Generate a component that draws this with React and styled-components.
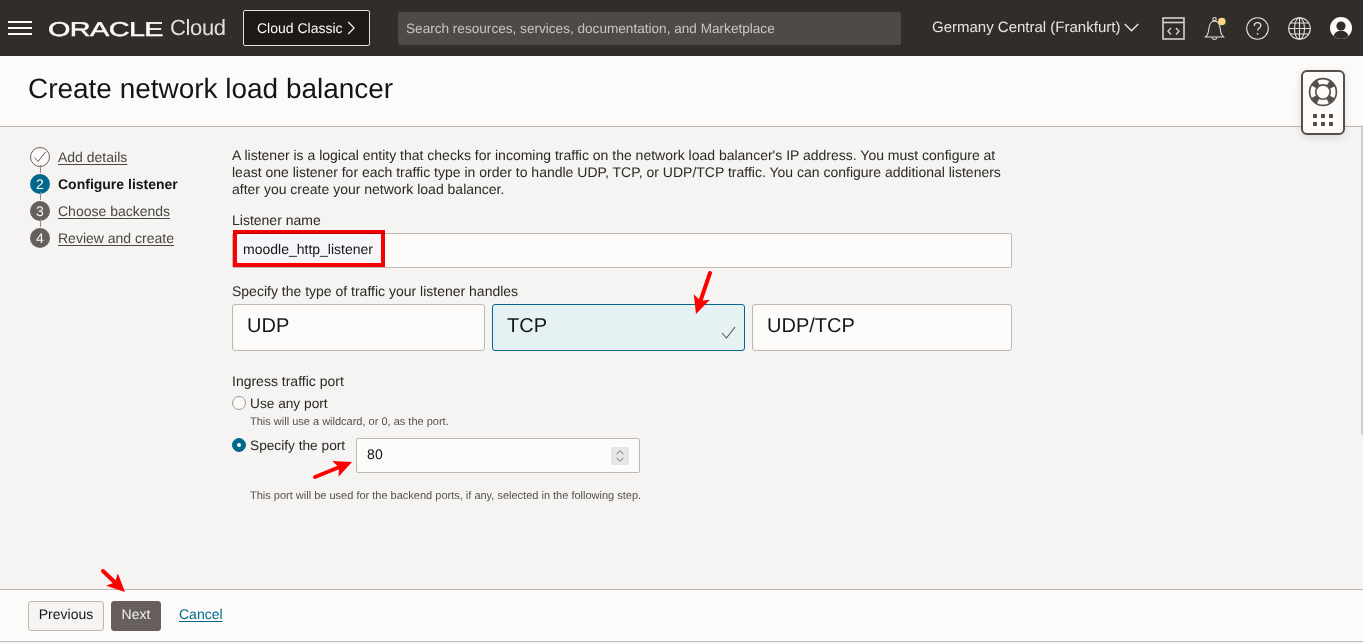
import React from 'react';
import styled, { createGlobalStyle } from 'styled-components';

const Global = createGlobalStyle`
  html, body { margin: 0; padding: 0; height: 100%; overflow: hidden; }
  body {
    font-family: "Liberation Sans", Arial, sans-serif;
    color: #161513;
    background: #f5f4f2;
    text-rendering: geometricPrecision;
  }
  * { box-sizing: border-box; }
`;

const Page = styled.div`
  position: relative;
  width: 1363px;
  height: 643px;
  display: flex;
  flex-direction: column;
  overflow: hidden;
`;

const TopBar = styled.header`
  height: 56px;
  flex: none;
  background: #312d2a;
  display: flex;
  align-items: center;
  padding: 0 9px 0 8px;
  color: #fcfbfa;
`;

const Burger = styled.div`
  width: 24px;
  height: 14px;
  flex: none;
  display: flex;
  flex-direction: column;
  justify-content: space-between;
  margin-top: -1px;
  span { display: block; height: 2px; background: #fcfbfa; }
`;

const Brand = styled.div`
  display: flex;
  align-items: center;
  margin-left: 16px;
  width: 179px;
  flex: none;
  height: 24px;
`;

const Wordmark = styled.span`
  display: inline-block;
  width: 113px;
  flex: none;
  margin-top: 3px;
  font-size: 20px;
  line-height: 24px;
  font-weight: 400;
  -webkit-text-stroke: 0.45px #fcfbfa;
  transform: scaleX(1.44);
  transform-origin: left center;
  letter-spacing: -0.4px;
`;

const CloudWord = styled.span`
  font-size: 22px;
  line-height: 24px;
  letter-spacing: -0.35px;
  color: #e4e1dd;
  margin-left: 9px;
`;

const ClassicButton = styled.div`
  width: 127px;
  height: 36px;
  flex: none;
  margin-left: 16px;
  background: #1d1a18;
  border: 1px solid #e4e1dd;
  border-radius: 2px;
  display: flex;
  align-items: center;
  padding-left: 13px;
  gap: 4px;
  font-size: 14px;
`;

const Search = styled.div`
  width: 503px;
  height: 33px;
  flex: none;
  margin-left: 28px;
  background: #4f4a46;
  border-radius: 2px;
  color: #c9c5c0;
  font-size: 13.6px;
  display: flex;
  align-items: center;
  padding-left: 8px;
`;

const Region = styled.div`
  margin-left: 31px;
  width: 209px;
  flex: none;
  display: flex;
  align-items: center;
  gap: 4px;
  font-size: 15px;
  color: #e9e6e2;
  padding-bottom: 2px;
`;

const IconRow = styled.div`
  display: flex;
  align-items: center;
  gap: 19px;
  margin-left: 21px;
  svg { display: block; flex: none; }
`;

const TitleBar = styled.div`
  height: 71px;
  flex: none;
  background: #fcfbfa;
  border-bottom: 1px solid #bdb8b2;
  padding: 16px 28px 0;
`;

const Title = styled.h1`
  margin: 0;
  font-size: 27.96px;
  line-height: 34px;
  font-weight: 400;
  color: #161513;
`;

const Body = styled.div`
  flex: 1;
  display: flex;
  min-height: 0;
  position: relative;
`;

const Steps = styled.nav`
  width: 232px;
  flex: none;
  padding: 16px 0 0 30px;
  display: flex;
  flex-direction: column;
`;

const Step = styled.div`
  position: relative;
  height: 27px;
  display: flex;
  align-items: center;
  gap: 8px;
  font-size: 14px;
  &:not(:last-child)::after {
    content: '';
    position: absolute;
    left: 10px;
    top: 22px;
    width: 1px;
    height: 8px;
    background: #8f8a85;
  }
`;

const Bullet = styled.span`
  width: 20px;
  height: 20px;
  flex: none;
  border-radius: 50%;
  display: flex;
  align-items: center;
  justify-content: center;
  font-size: 14px;
  color: #fcfbfa;
  background: ${p => p.$active ? '#00688c' : '#665f5b'};
`;

const DoneBullet = styled(Bullet)`
  background: #fcfbfa;
  border: 1px solid #665f5b;
`;

const StepLink = styled.a`
  color: #4a4642;
  text-decoration: underline;
  text-underline-offset: 2px;
  text-decoration-thickness: 1px;
`;

const StepCurrent = styled.span`
  font-weight: 700;
  color: #161513;
`;

const Form = styled.main`
  width: 780px;
  flex: none;
  padding-top: 20px;
  font-size: 14px;
`;

const Intro = styled.p`
  margin: 0;
  font-size: 14px;
  line-height: 17px;
  color: #2b2825;
`;

const Label = styled.div`
  font-size: 14px;
  line-height: 17px;
  color: #2b2825;
  margin-top: ${p => p.$top}px;
  margin-bottom: ${p => p.$bottom}px;
`;

const NameInput = styled.div`
  height: 35px;
  background: #fcfbfa;
  border: 1px solid #bdb8b2;
  border-radius: 2px;
  padding-left: 10px;
  padding-bottom: 3px;
  display: flex;
  align-items: center;
  color: #161513;
`;

const Cards = styled.div`
  display: grid;
  grid-template-columns: 253px 253px 260px;
  column-gap: 7px;
`;

const Card = styled.div`
  position: relative;
  height: 47px;
  border-radius: 3px;
  border: 1px solid ${p => p.$selected ? '#00688c' : '#bdb8b2'};
  background: ${p => p.$selected ? '#e6f1f4' : '#fcfbfa'};
  font-size: 20px;
  line-height: 24px;
  padding: 9px 14px;
  color: #161513;
`;

const CardCheck = styled.svg`
  position: absolute;
  right: 8px;
  bottom: 11px;
`;

const RadioRow = styled.div`
  display: flex;
  align-items: flex-start;
  gap: 4px;
  margin-top: ${p => p.$top || 0}px;
`;

const Radio = styled.span`
  width: 14px;
  height: 14px;
  flex: none;
  margin-top: 1px;
  border-radius: 50%;
  background: ${p => p.$on ? '#00688c' : '#fcfbfa'};
  border: 1px solid ${p => p.$on ? '#00688c' : '#9e9892'};
  display: flex;
  align-items: center;
  justify-content: center;
  &::after {
    content: '';
    display: ${p => p.$on ? 'block' : 'none'};
    width: 4px;
    height: 4px;
    border-radius: 50%;
    background: #fcfbfa;
  }
`;

const RadioText = styled.span`
  font-size: 13.7px;
  line-height: 17px;
  color: #2b2825;
`;

const Hint = styled.div`
  font-size: 11px;
  line-height: 14px;
  color: #55504c;
  margin-left: 18px;
  margin-top: ${p => p.$top}px;
`;

const PortRow = styled.div`
  display: flex;
  align-items: flex-start;
  margin-top: 8px;
`;

const PortInput = styled.div`
  width: 284px;
  height: 35px;
  margin-left: 11px;
  margin-top: 1px;
  background: #fcfbfa;
  border: 1px solid #bdb8b2;
  border-radius: 2px;
  display: flex;
  align-items: center;
  justify-content: space-between;
  padding: 0 10px;
`;

const PortValue = styled.span`
  margin-bottom: 4px;
`;

const Spinner = styled.span`
  width: 18px;
  height: 18px;
  background: #e6e5e8;
  display: flex;
  align-items: center;
  justify-content: center;
`;

const Footer = styled.footer`
  height: 53px;
  flex: none;
  margin-bottom: 1px;
  background: #fcfbfa;
  border-top: 1px solid #bdb8b2;
  border-bottom: 1px solid #bdb8b2;
  display: flex;
  align-items: flex-start;
  padding: 11px 0 0 28px;
  font-size: 14px;
`;

const Button = styled.div`
  height: 30px;
  border-radius: 3px;
  display: flex;
  align-items: center;
  justify-content: center;
  padding-bottom: 4px;
  width: ${p => p.$w}px;
  margin-right: 7px;
  background: ${p => p.$primary ? '#665f5b' : '#f5f4f2'};
  color: ${p => p.$primary ? '#f1efed' : '#161513'};
  border: 1px solid ${p => p.$primary ? '#665f5b' : '#bdb8b2'};
`;

const Cancel = styled.a`
  margin: 5px 0 0 11px;
  color: #00688c;
  text-decoration: underline;
  text-underline-offset: 2px;
`;

const HelpWidget = styled.div`
  position: absolute;
  left: 1301px;
  top: 70px;
  width: 44px;
  height: 65px;
  background: #fcfbfa;
  border: 2px solid #55504c;
  border-radius: 6px;
  box-shadow: 0 2px 8px rgba(0,0,0,.12);
  display: flex;
  flex-direction: column;
  align-items: center;
  padding-top: 5px;
  gap: 7px;
`;

const Scrollbar = styled.div`
  position: absolute;
  left: 1361px;
  top: 127px;
  width: 2px;
  height: 308px;
  background: #d0cecb;
`;

const Mark = styled.svg`
  position: absolute;
  pointer-events: none;
  overflow: visible;
`;

const Highlight = styled.div`
  position: absolute;
  left: 233px;
  top: 230px;
  width: 152px;
  height: 37px;
  border: 4px solid #fe0000;
  background: #f9f9ff;
  mix-blend-mode: multiply;
  pointer-events: none;
`;

const Arrow = ({ x1, y1, x2, y2 }) => {
  const a = Math.atan2(y2 - y1, x2 - x1);
  const deg = (a * 180) / Math.PI;
  const len = Math.hypot(x2 - x1, y2 - y1);
  return (
    <Mark style={{ left: x1, top: y1 }} width="1" height="1">
      <g transform={`rotate(${deg})`}>
        <path d={`M0 0 L${len - 12} 0`} stroke="#fe0000" strokeWidth="4" strokeLinecap="round" />
        <path d={`M${len} 0 L${len - 18} -8.500 L${len - 14} 0 L${len - 18} 8.500 Z`} fill="#fe0000" />
      </g>
    </Mark>
  );
};

const Chevron = ({ dir = 'right', size = 14, color = '#fcfbfa' }) => (
  dir === 'right'
    ? <svg width={size * 0.6} height={size} viewBox="0 0 8 14"><path d="M1 1l6 6-6 6" fill="none" stroke={color} strokeWidth="1.1" /></svg>
    : <svg width={size} height={size * 0.6} viewBox="0 0 14 8" style={{ flex: 'none' }}><path d="M.7 .7L7 7l6.3-6.3" fill="none" stroke={color} strokeWidth="1.4" /></svg>
);

export default function App() {
  return (
    <Page>
      <Global />
      <TopBar>
        <Burger><span /><span /><span /></Burger>
        <Brand>
          <Wordmark>ORACLE</Wordmark>
          <CloudWord>Cloud</CloudWord>
        </Brand>
        <ClassicButton>
          Cloud Classic
          <Chevron size={14} />
        </ClassicButton>
        <Search>Search resources, services, documentation, and Marketplace</Search>
        <Region>
          Germany Central (Frankfurt)
          <Chevron dir="down" size={15} color="#e9e6e2" />
        </Region>
        <IconRow>
          <svg width="23" height="23" viewBox="0 0 23 23" fill="none" stroke="#d5d2ce" strokeWidth="1.6">
            <rect x="1" y="1" width="21" height="21" />
            <path d="M1 5.500h21" />
            <path d="M9 11l-3 3.200 3 3.200M14 11l3 3.200-3 3.200" strokeWidth="1.400" />
          </svg>
          <svg width="23" height="25" viewBox="0 0 23 25" fill="none" stroke="#e4e1dd" strokeWidth="1.100">
            <path d="M1.500 21c2.500-2 3-4 3.400-8.500.4-4 2.500-7.500 5.600-7.500 3.200 0 5.200 3.500 5.700 7.500.4 4.500 1 6.500 3.300 8.500z" />
            <path d="M8 21.500c.3 2.600 4.700 2.600 5 0" />
            <circle cx="10.500" cy="3.200" r="1.700" />
            <circle cx="17.800" cy="5.500" r="3.800" fill="#fad782" stroke="none" />
          </svg>
          <svg width="23" height="23" viewBox="0 0 23 23" fill="none" stroke="#e4e1dd" strokeWidth="1.100">
            <circle cx="11.500" cy="11.500" r="10.800" />
            <path d="M8.300 9c0-2 1.500-3.300 3.300-3.300s3.200 1.200 3.200 2.900c0 2.400-3.200 2.400-3.200 5" strokeWidth="1.300" />
            <circle cx="11.600" cy="16.800" r=".9" fill="#e4e1dd" stroke="none" />
          </svg>
          <svg width="23" height="23" viewBox="0 0 23 23" fill="none" stroke="#e4e1dd" strokeWidth="1.100">
            <circle cx="11.500" cy="11.500" r="10.800" />
            <ellipse cx="11.500" cy="11.500" rx="5" ry="10.800" />
            <path d="M11.500 .7v21.600M.7 11.500h21.600M2.300 6h18.400M2.300 17h18.400" />
          </svg>
          <svg width="22" height="22" viewBox="0 0 22 22">
            <circle cx="11" cy="11" r="11" fill="#fcfbfa" />
            <circle cx="11" cy="9" r="4.600" fill="#312d2a" />
            <path d="M3.500 19c1.200-3.600 4-5.200 7.500-5.200s6.300 1.600 7.500 5.200c-2 1.900-4.600 3-7.500 3s-5.500-1.100-7.500-3z" fill="#312d2a" />
          </svg>
        </IconRow>
      </TopBar>

      <TitleBar><Title>Create network load balancer</Title></TitleBar>

      <Body>
        <Steps>
          <Step>
            <DoneBullet>
              <svg width="14" height="12" viewBox="0 0 14 12"><path d="M1.500 6.500l3.500 4L12.500 1" fill="none" stroke="#665f5b" strokeWidth="1" /></svg>
            </DoneBullet>
            <StepLink>Add details</StepLink>
          </Step>
          <Step><Bullet $active>2</Bullet><StepCurrent>Configure listener</StepCurrent></Step>
          <Step><Bullet>3</Bullet><StepLink>Choose backends</StepLink></Step>
          <Step><Bullet>4</Bullet><StepLink>Review and create</StepLink></Step>
        </Steps>

        <Form>
          <Intro>
            A listener is a logical entity that checks for incoming traffic on the network load balancer's IP address. You must configure at<br />
            least one listener for each traffic type in order to handle UDP, TCP, or UDP/TCP traffic. You can configure additional listeners<br />
            after you create your network load balancer.
          </Intro>
          <Label $top={14} $bottom={4}>Listener name</Label>
          <NameInput>moodle_http_listener</NameInput>
          <Label $top={15} $bottom={4}>Specify the type of traffic your listener handles</Label>
          <Cards>
            <Card>UDP</Card>
            <Card $selected>
              TCP
              <CardCheck width="15" height="13" viewBox="0 0 15 13">
                <path d="M1 7l4.500 5L14 1" fill="none" stroke="#55504c" strokeWidth="1.100" />
              </CardCheck>
            </Card>
            <Card>UDP/TCP</Card>
          </Cards>
          <Label $top={22} $bottom={5}>Ingress traffic port</Label>
          <RadioRow>
            <Radio />
            <RadioText>Use any port</RadioText>
          </RadioRow>
          <Hint $top={3}>This will use a wildcard, or 0, as the port.</Hint>
          <PortRow>
            <RadioRow>
              <Radio $on />
              <RadioText>Specify the port</RadioText>
            </RadioRow>
            <PortInput>
              <PortValue>80</PortValue>
              <Spinner>
                <svg width="10" height="14" viewBox="0 0 10 14" fill="none" stroke="#7a7570" strokeWidth="1">
                  <path d="M1.500 5L5 1.800 8.500 5M1.500 9L5 12.200 8.500 9" />
                </svg>
              </Spinner>
            </PortInput>
          </PortRow>
          <Hint $top={16}>This port will be used for the backend ports, if any, selected in the following step.</Hint>
        </Form>
      </Body>

      <Footer>
        <Button $w={76}>Previous</Button>
        <Button $w={50} $primary>Next</Button>
        <Cancel>Cancel</Cancel>
      </Footer>

      <HelpWidget>
        <svg width="30" height="30" viewBox="0 0 32 32" fill="none" stroke="#55504c">
          <circle cx="16" cy="16" r="14.300" strokeWidth="1.800" />
          <circle cx="16" cy="16" r="7.700" strokeWidth="1.800" />
          <circle cx="16" cy="16" r="11" strokeWidth="7" strokeDasharray="6.500 10.780" strokeDashoffset="-5.390" />
        </svg>
        <svg width="20" height="12" viewBox="0 0 20 12" fill="#55504c">
          <rect x="0" y="0" width="4" height="4" /><rect x="8" y="0" width="4" height="4" /><rect x="16" y="0" width="4" height="4" />
          <rect x="0" y="8" width="4" height="4" /><rect x="8" y="8" width="4" height="4" /><rect x="16" y="8" width="4" height="4" />
        </svg>
      </HelpWidget>

      <Scrollbar />
      <Highlight />
      <Arrow x1={710} y1={273} x2={696} y2={314} />
      <Arrow x1={315} y1={477} x2={352} y2={462} />
      <Arrow x1={103} y1={571} x2={125} y2={592} />
    </Page>
  );
}
